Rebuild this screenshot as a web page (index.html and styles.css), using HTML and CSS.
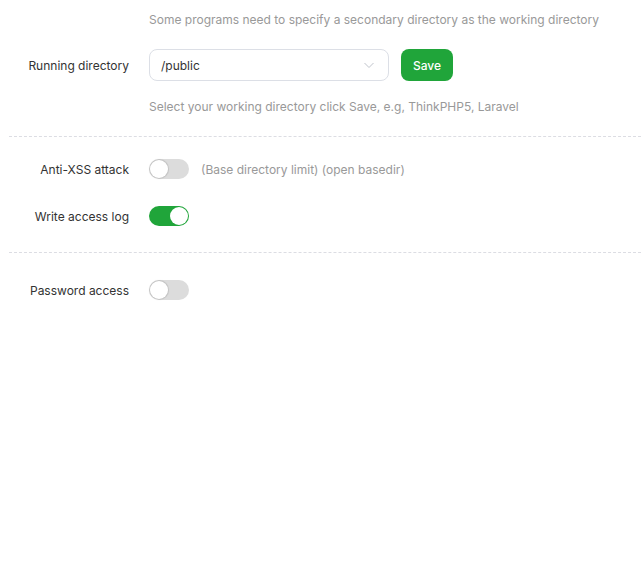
FILE: index.html
```html
<!DOCTYPE html>
<html>
<head>
<meta charset="utf-8">
<link rel="stylesheet" href="styles.css">
</head>
<body>
<div class="panel">
  <section class="group">
    <div class="hint hint-top">Some programs need to specify a secondary directory as the working directory</div>
    <div class="row row-select">
      <label class="label">Running directory</label>
      <div class="control">
        <div class="select">
          <span class="select-value">/public</span>
          <svg class="chevron" width="12" height="12" viewBox="0 0 12 12"><path d="M1.5 4l4.5 4.5L10.5 4" fill="none" stroke="#c0c4cc" stroke-width="1"/></svg>
        </div>
        <button class="btn">Save</button>
      </div>
    </div>
    <div class="hint hint-bottom">Select your working directory click Save, e.g, ThinkPHP5, Laravel</div>
  </section>
  <section class="group group-switches">
    <div class="row">
      <label class="label">Anti-XSS attack</label>
      <div class="control">
        <span class="switch"><span class="knob"></span></span>
        <span class="note">(Base directory limit) (open basedir)</span>
      </div>
    </div>
    <div class="row row-second">
      <label class="label">Write access log</label>
      <div class="control">
        <span class="switch on"><span class="knob"></span></span>
      </div>
    </div>
  </section>
  <section class="group group-last">
    <div class="row">
      <label class="label">Password access</label>
      <div class="control">
        <span class="switch"><span class="knob"></span></span>
      </div>
    </div>
  </section>
</div>
</body>
</html>
```
FILE: styles.css
```css
html, body {
  margin: 0;
  padding: 0;
  background: #fff;
}
body {
  font-family: Inter, "Liberation Sans", sans-serif;
  font-size: 12px;
  color: #333;
}
.panel {
  padding-left: 9px;
}
.group {
  border-bottom: 1px dashed #dcdde3;
}
.group-last {
  border-bottom: none;
  padding-top: 21px;
}
.hint {
  color: #999;
  line-height: 20px;
  padding-left: 140px;
}
.hint-top {
  padding-top: 10px;
}
.hint-bottom {
  margin-top: 16px;
  padding-bottom: 19px;
}
.row {
  display: flex;
  align-items: center;
  height: 32px;
}
.row-select {
  margin-top: 19px;
}
.label {
  width: 120px;
  padding-right: 20px;
  text-align: right;
  color: #333;
  flex: none;
}
.control {
  display: flex;
  align-items: center;
  gap: 12px;
}
.select {
  box-sizing: border-box;
  width: 240px;
  height: 32px;
  border: 1px solid #dcdfe6;
  border-radius: 8px;
  display: flex;
  align-items: center;
  justify-content: space-between;
  padding: 0 13px 0 11px;
  color: #333;
}
.chevron {
  display: block;
}
.btn {
  box-sizing: border-box;
  width: 52px;
  height: 32px;
  border: none;
  border-radius: 8px;
  background: #20a53a;
  color: #fff;
  font-family: Inter, "Liberation Sans", sans-serif;
  font-size: 12px;
  font-weight: 500;
  padding: 0;
}
.group-switches {
  padding-top: 16px;
  padding-bottom: 20px;
}
.row-second {
  margin-top: 15px;
}
.switch {
  position: relative;
  display: block;
  width: 40px;
  height: 20px;
  border-radius: 10px;
  background: #dcdcdc;
  flex: none;
}
.switch .knob {
  position: absolute;
  top: 1px;
  left: 1px;
  width: 18px;
  height: 18px;
  border-radius: 50%;
  background: #fff;
  box-shadow: 0 0 1px 1px rgba(0,0,0,0.12);
}
.switch.on {
  background: #20a53a;
}
.switch.on .knob {
  left: 21px;
  box-shadow: none;
}
.note {
  color: #999;
}
```
